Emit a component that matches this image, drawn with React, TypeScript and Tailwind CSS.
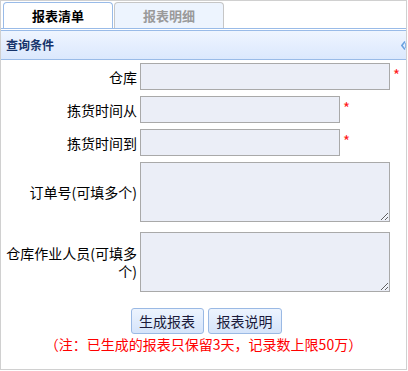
import React from 'react'

const font = { fontFamily: '"Noto Sans CJK SC", "Noto Sans", sans-serif' }

function Star() {
  return <span className="ml-[3px] self-start mt-[4px] text-[15px] leading-none text-[#ff1a1a]">*</span>
}

function Row({ label, children }: { label: string; children: React.ReactNode }) {
  return (
    <div className="flex items-center">
      <div className="w-[139px] shrink-0 pr-[3px] pl-[4px] text-right text-[14px] leading-[18px] text-black">{label}</div>
      {children}
    </div>
  )
}

export default function App() {
  const inputCls = 'h-[27px] border border-[#a9a9a9] bg-[#ebeef7] px-1 text-[13px] outline-none'
  const areaCls = 'block h-[60px] w-[250px] border border-[#a9a9a9] bg-[#ebeef7] px-1 text-[13px] outline-none'
  const btnCls =
    'h-[26px] rounded-[3px] border border-[#9ab9e4] bg-gradient-to-b from-[#edf4fe] to-[#d5e4fa] text-[14px] text-[#1a1a3a]'

  return (
    <div
      className="w-[407px] h-[370px] border border-[#d0d0d0] bg-white overflow-hidden [text-spacing-trim:space-all]"
      style={font}
    >
      {/* tabs */}
      <div className="flex h-[28px] pl-[2px] pt-[1px] border-b border-[#99bbe8]">
        <div className="flex h-[26px] w-[110px] items-center justify-center rounded-t-[4px] border border-b-0 border-[#99bbe8] bg-white text-[13px] font-bold text-black">
          报表清单
        </div>
        <div className="ml-[1px] flex h-[26px] w-[110px] items-center justify-center rounded-t-[4px] border border-b-0 border-[#c6c6c6] bg-[#edf4fe] text-[13px] font-bold text-[#9a9a9a]">
          报表明细
        </div>
      </div>

      {/* panel header */}
      <div className="mt-[1px] flex h-[30px] items-center justify-between border-y border-[#99bbe8] bg-gradient-to-b from-[#eff5ff] to-[#dbe8fd] pl-[5px]">
        <span className="text-[12px] font-bold text-[#15336b]">查询条件</span>
        <svg width="5" height="9" viewBox="0 0 5 9">
          <path d="M4 0.5 L0.8 4.5 L4 8.5" fill="none" stroke="#6aa2e0" strokeWidth="1.6" />
          <path d="M5 2 L5 7" fill="none" stroke="#6aa2e0" strokeWidth="1.4" />
        </svg>
      </div>

      {/* form */}
      <div className="flex flex-col pt-[3px]">
        <Row label="仓库">
          <input className={`${inputCls} w-[250px]`} />
          <Star />
        </Row>
        <div className="h-[6px]" />
        <Row label="拣货时间从">
          <input className={`${inputCls} w-[200px]`} />
          <Star />
        </Row>
        <div className="h-[6px]" />
        <Row label="拣货时间到">
          <input className={`${inputCls} w-[200px]`} />
          <Star />
        </Row>
        <div className="h-[6px]" />
        <Row label="订单号(可填多个)">
          <textarea className={areaCls} />
        </Row>
        <div className="h-[10px]" />
        <Row label="仓库作业人员(可填多个)">
          <textarea className={areaCls} />
        </Row>

        <div className="mt-[16px] flex justify-center gap-[4px] pl-[5px]">
          <button className={`${btnCls} w-[73px]`}>生成报表</button>
          <button className={`${btnCls} w-[74px]`}>报表说明</button>
        </div>
        <div className="text-center text-[14px] leading-[20px] text-[#ff0000]">
          （注：已生成的报表只保留3天，记录数上限50万）
        </div>
      </div>
    </div>
  )
}
